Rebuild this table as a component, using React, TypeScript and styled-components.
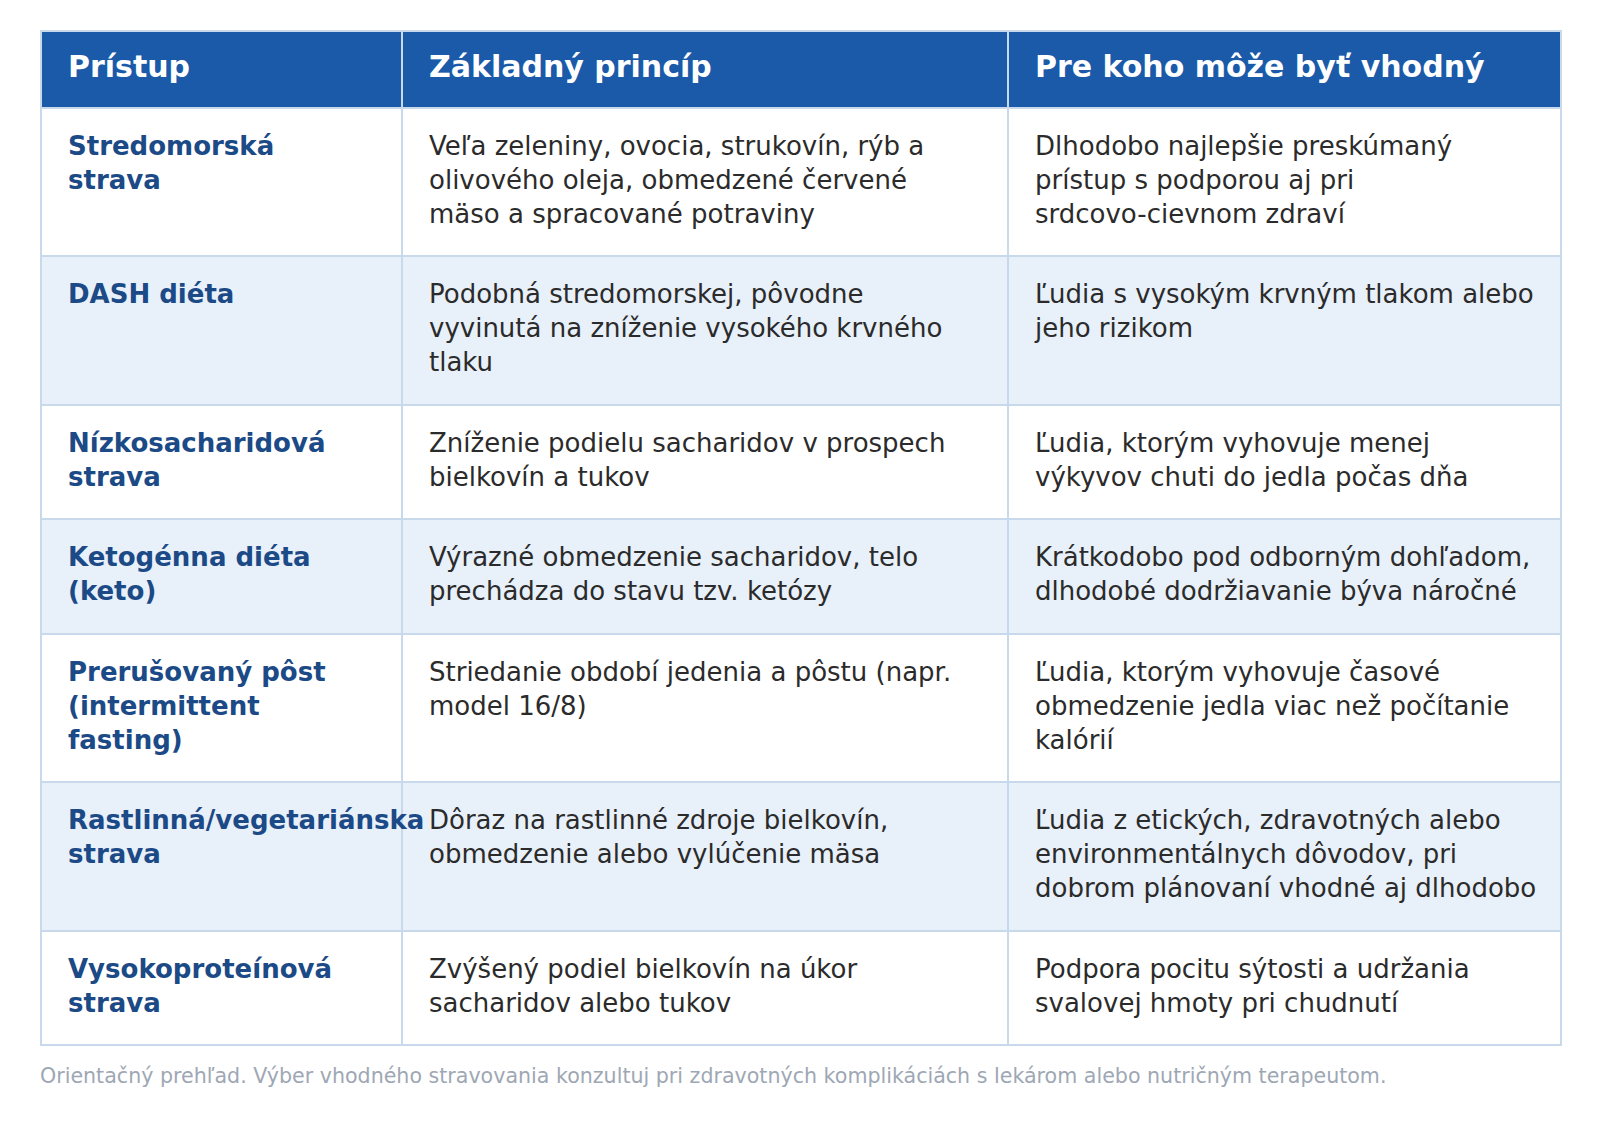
import styled, { createGlobalStyle } from 'styled-components'

const GlobalStyle = createGlobalStyle`
  html, body {
    margin: 0;
    padding: 0;
    background: #ffffff;
  }
  body {
    font-family: "DejaVu Sans", "Noto Sans", sans-serif;
  }
`

type Row = {
  name: string
  principle: string
  audience: string
}

// \u2060 (word joiner) keeps slash and hyphen from breaking the line
const rows: Row[] = [
  {
    name: 'Stredomorská strava',
    principle: 'Veľa zeleniny, ovocia, strukovín, rýb a olivového oleja, obmedzené červené mäso a spracované potraviny',
    audience: 'Dlhodobo najlepšie preskúmaný prístup s podporou aj pri srdcovo-\u2060cievnom zdraví',
  },
  {
    name: 'DASH diéta',
    principle: 'Podobná stredomorskej, pôvodne vyvinutá na zníženie vysokého krvného tlaku',
    audience: 'Ľudia s vysokým krvným tlakom alebo jeho rizikom',
  },
  {
    name: 'Nízkosacharidová strava',
    principle: 'Zníženie podielu sacharidov v prospech bielkovín a tukov',
    audience: 'Ľudia, ktorým vyhovuje menej výkyvov chuti do jedla počas dňa',
  },
  {
    name: 'Ketogénna diéta (keto)',
    principle: 'Výrazné obmedzenie sacharidov, telo prechádza do stavu tzv. ketózy',
    audience: 'Krátkodobo pod odborným dohľadom, dlhodobé dodržiavanie býva náročné',
  },
  {
    name: 'Prerušovaný pôst (intermittent fasting)',
    principle: 'Striedanie období jedenia a pôstu (napr. model 16/8)',
    audience: 'Ľudia, ktorým vyhovuje časové obmedzenie jedla viac než počítanie kalórií',
  },
  {
    name: 'Rastlinná/\u2060vegetariánska strava',
    principle: 'Dôraz na rastlinné zdroje bielkovín, obmedzenie alebo vylúčenie mäsa',
    audience: 'Ľudia z etických, zdravotných alebo environmentálnych dôvodov, pri dobrom plánovaní vhodné aj dlhodobo',
  },
  {
    name: 'Vysokoproteínová strava',
    principle: 'Zvýšený podiel bielkovín na úkor sacharidov alebo tukov',
    audience: 'Podpora pocitu sýtosti a udržania svalovej hmoty pri chudnutí',
  },
]

const App = () => {
  return (
    <Page>
      <GlobalStyle />
      <Table>
        <colgroup>
          <col style={{ width: 361 }} />
          <col style={{ width: 606 }} />
          <col style={{ width: 553 }} />
        </colgroup>
        <thead>
          <tr>
            <HeadCell>Prístup</HeadCell>
            <HeadCell>Základný princíp</HeadCell>
            <HeadCell>Pre koho môže byť vhodný</HeadCell>
          </tr>
        </thead>
        <tbody>
          {rows.map((row, i) => (
            <BodyRow key={row.name} $striped={i % 2 === 1}>
              <NameCell>{row.name}</NameCell>
              <PrincipleCell>{row.principle}</PrincipleCell>
              <Cell>{row.audience}</Cell>
            </BodyRow>
          ))}
        </tbody>
      </Table>
      <Note>
        Orientačný prehľad. Výber vhodného stravovania konzultuj pri zdravotných komplikáciách s lekárom alebo nutričným terapeutom.
      </Note>
    </Page>
  )
}

export default App


const Page = styled.div`
    padding: 30px 40px 40px 40px;
    display: flex;
    flex-direction: column;
    row-gap: 18px;
`

const Table = styled.table`
    width: 1520px;
    table-layout: fixed;
    border-collapse: collapse;
    border: 2px solid #c9d9ec;
`

const HeadCell = styled.th`
    background-color: #1a5aa9;
    color: #ffffff;
    text-align: left;
    font-size: 30px;
    font-weight: 700;
    line-height: 39px;
    padding: 15px 20px 21px 26px;
    border: 2px solid #c9d9ec;
    border-top: none;
`

const BodyRow = styled.tr<{ $striped: boolean }>`
    background-color: ${({ $striped }) => ($striped ? '#e8f0fa' : '#ffffff')};
`

const Cell = styled.td`
    vertical-align: top;
    padding: 21px 17px 24px 26px;
    border: 2px solid #c9d9ec;
    font-size: 26px;
    line-height: 1.3;
    color: #2b2b2b;
`

const NameCell = styled(Cell)`
    padding-right: 31px;
    font-weight: 700;
    color: #1b4a86;
`

const PrincipleCell = styled(Cell)`
    padding-right: 43px;
`

const Note = styled.div`
    font-size: 20.6px;
    color: #9ea7b4;
`
